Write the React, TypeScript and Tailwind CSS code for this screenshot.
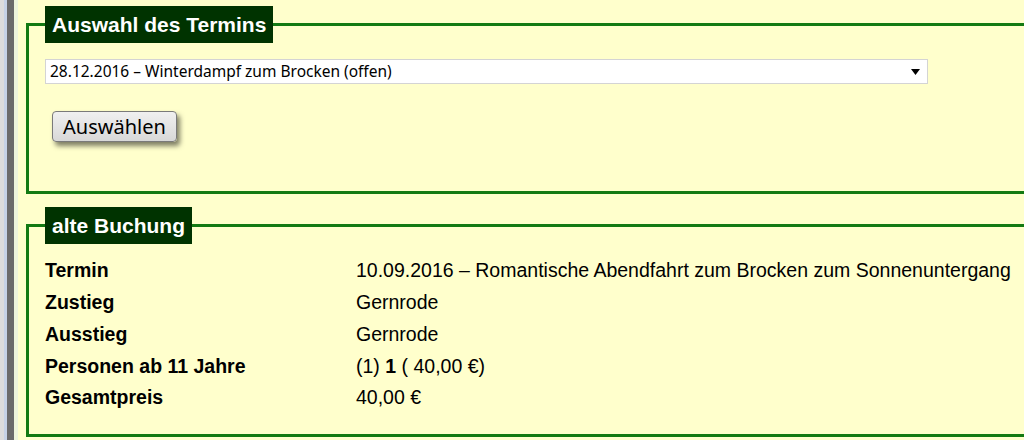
import React from 'react';

// Zeilen der alten Buchung
const ROWS: { label: string; value: React.ReactNode }[] = [
  { label: 'Termin', value: '10.09.2016 – Romantische Abendfahrt zum Brocken zum Sonnenuntergang' },
  { label: 'Zustieg', value: 'Gernrode' },
  { label: 'Ausstieg', value: 'Gernrode' },
  {
    label: 'Personen ab 11 Jahre',
    value: (
      <span>
        (1) <b>1</b> ( 40,00 €)
      </span>
    ),
  },
  { label: 'Gesamtpreis', value: '40,00 €' },
];

const Legend: React.FC<{ children: React.ReactNode }> = ({ children }) => (
  <legend className="px-[7px] h-[37px] flex items-center bg-[#003300] text-white font-bold text-[21px] font-['Liberation_Sans',Arial,sans-serif]">
    {children}
  </legend>
);

export default function App() {
  return (
    <div className="flex w-[1024px] h-[440px] overflow-hidden bg-[#ffffcc]">
      {/* linker Fensterrand */}
      <div className="w-[4px] bg-[#dcdcdc]" />
      <div className="w-[3px] bg-[#c6d2e6]" />
      <div className="w-[7px] bg-[#6b6b6b]" />
      <div className="w-[4px] bg-[#eef5dc]" />

      <div className="flex-1 pl-[8px] pt-[6px] min-w-0">
        <div className="w-[1030px]">
          <fieldset className="border-[3px] border-[#137a13] pl-[16px] pb-[49px]">
            <Legend>Auswahl des Termins</Legend>
            <div className="relative mt-[16px] w-[883px] h-[25px]">
              <select
                defaultValue="1"
                className="appearance-none w-full h-full bg-white border border-[#d4d4d4] pl-[4px] text-[15.5px] text-black font-['Noto_Sans',sans-serif] outline-none"
              >
                <option value="1">28.12.2016 – Winterdampf zum Brocken (offen)</option>
              </select>
              <svg className="absolute right-[8px] top-[10px] pointer-events-none" width="9" height="6" viewBox="0 0 9 6">
                <path d="M0 0h9L4.5 6z" fill="#000" />
              </svg>
            </div>
            <button className="mt-[27px] ml-[7px] w-[125px] h-[31px] rounded-[4px] border border-[#7a7a7a] bg-gradient-to-b from-[#f0f0f0] to-[#d8d8d8] shadow-[3px_4px_5px_rgba(0,0,0,0.5)] text-[20px] text-black font-['Noto_Sans',sans-serif] leading-none">
              Auswählen
            </button>
          </fieldset>

          <fieldset className="mt-[13px] border-[3px] border-[#137a13] pl-[16px] pt-[11px] pb-[20px]">
            <Legend>alte Buchung</Legend>
            <div className="grid grid-cols-[311px_1fr] font-['Liberation_Sans',Arial,sans-serif] text-[19.5px] text-black">
              {ROWS.map((row) => (
                <React.Fragment key={row.label}>
                  <div className="h-[31.75px] flex items-center font-bold">{row.label}</div>
                  <div className="h-[31.75px] flex items-center whitespace-nowrap">{row.value}</div>
                </React.Fragment>
              ))}
            </div>
          </fieldset>
        </div>
      </div>
    </div>
  );
}
